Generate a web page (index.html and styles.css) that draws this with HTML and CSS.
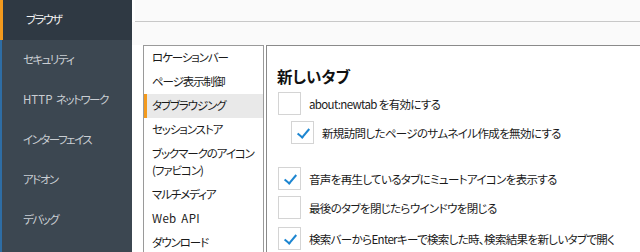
FILE: index.html
```html
<!DOCTYPE html>
<html lang="ja">
<head>
  <meta charset="UTF-8" />
  <title>設定</title>
  <link rel="stylesheet" href="styles.css">
</head>
<body>
  <div class="fenster">
    <nav class="seitenleiste">
      <div class="menue-punkt aktiv">ブラウザ</div>
      <div class="menue-punkt">セキュリティ</div>
      <div class="menue-punkt"><span class="latein">HTTP </span>ネットワーク</div>
      <div class="menue-punkt">インターフェイス</div>
      <div class="menue-punkt">アドオン</div>
      <div class="menue-punkt">デバッグ</div>
    </nav>

    <main class="inhalt">
      <div class="kopf"></div>
      <div class="kopf-unten"></div>

      <div class="bereich">
        <ul class="liste">
          <li>ロケーションバー</li>
          <li>ページ表示制御</li>
          <li class="gewaehlt">タブブラウジング</li>
          <li>セッションストア</li>
          <li>ブックマークのアイコン<br>(ファビコン)</li>
          <li>マルチメディア</li>
          <li class="latein">Web API</li>
          <li>ダウンロード</li>
        </ul>

        <section class="seite">
          <h2>新しいタブ</h2>
          <label class="option"><span class="box"></span>about:newtab を有効にする</label>
          <label class="option eingerueckt"><span class="box an"></span>新規訪問したページのサムネイル作成を無効にする</label>
          <div class="abstand"></div>
          <label class="option"><span class="box an"></span>音声を再生しているタブにミュートアイコンを表示する</label>
          <label class="option"><span class="box"></span>最後のタブを閉じたらウインドウを閉じる</label>
          <label class="option letzte"><span class="box an"></span>検索バーからEnterキーで検索した時、検索結果を新しいタブで開く</label>
        </section>
      </div>
    </main>
  </div>
</body>
</html>
```

FILE: styles.css
```css
* {
  box-sizing: border-box;
}

body {
  margin: 0;
  padding: 0;
  overflow: hidden;
  font-family: "Noto Sans CJK JP", "Noto Sans", sans-serif;
  font-size: 11.5px;
  font-feature-settings: "palt";
  letter-spacing: -0.65px;
  color: #1a1a1a;
  background: #ffffff;
}

.latein {
  letter-spacing: 0;
  word-spacing: 1px;
}

.fenster {
  display: flex;
  height: 252px;
  overflow: hidden;
}

.seitenleiste {
  width: 132px;
  flex-shrink: 0;
  background: #3c4751;
  border-left: 2px solid #2e6da4;
}

.menue-punkt {
  height: 40px;
  line-height: 39px;
  padding-left: 21px;
  font-size: 11.5px;
  letter-spacing: -1.5px;
  color: #c9ced3;
}

.menue-punkt.aktiv {
  background: #2f3943;
  color: #f2f2f2;
  margin-left: -2px;
  padding-left: 23px;
  border-left: 3px solid #f39a1e;
}

.inhalt {
  flex: 1;
  display: flex;
  flex-direction: column;
  background: #ffffff;
  min-width: 0;
}

.kopf {
  height: 22px;
  margin-left: 3px;
  background: #fafafa;
  border-bottom: 1px solid #c8c8c8;
}

.kopf-unten {
  height: 23px;
  background: #fafafa;
}

.bereich {
  display: flex;
  flex: 1;
  padding-left: 11px;
  min-height: 0;
}

.liste {
  list-style: none;
  margin: 0;
  padding: 0;
  width: 121px;
  flex-shrink: 0;
  border: 1px solid #9a9a9a;
  border-bottom: none;
  background: #ffffff;
  letter-spacing: -1.1px;
}

.liste li {
  padding: 3px 0 4px 8px;
  line-height: 17px;
  color: #1a1a1a;
  white-space: nowrap;
}

.liste li.latein {
  letter-spacing: 0.3px;
  word-spacing: 2px;
}

.liste li.gewaehlt {
  background: #e9e9e9;
  border-left: 3px solid #f39a1e;
  padding-left: 5px;
}

.seite {
  flex: 1;
  margin-left: 2px;
  border-left: 1px solid #8a8a8a;
  border-top: 1px solid #8a8a8a;
  padding: 20px 0 0 10px;
  white-space: nowrap;
}

.seite h2 {
  margin: 0 0 3px 0;
  font-size: 15.5px;
  font-weight: 600;
  letter-spacing: 0;
  line-height: 20px;
  color: #111111;
}

.option {
  display: flex;
  align-items: center;
  gap: 8px;
  height: 29px;
  margin-left: 1px;
}

.option.eingerueckt {
  margin-left: 14px;
}

.option.letzte {
  margin-top: 2px;
}

.abstand {
  height: 17px;
}

.box {
  width: 23px;
  height: 23px;
  border: 1px solid #d4d4d4;
  background: #ffffff;
  position: relative;
  flex-shrink: 0;
}

.box.an::after {
  content: "";
  position: absolute;
  left: 8px;
  top: 4px;
  width: 5px;
  height: 10px;
  border-right: 2px solid #1d86d1;
  border-bottom: 2px solid #1d86d1;
  transform: rotate(40deg);
}
```
